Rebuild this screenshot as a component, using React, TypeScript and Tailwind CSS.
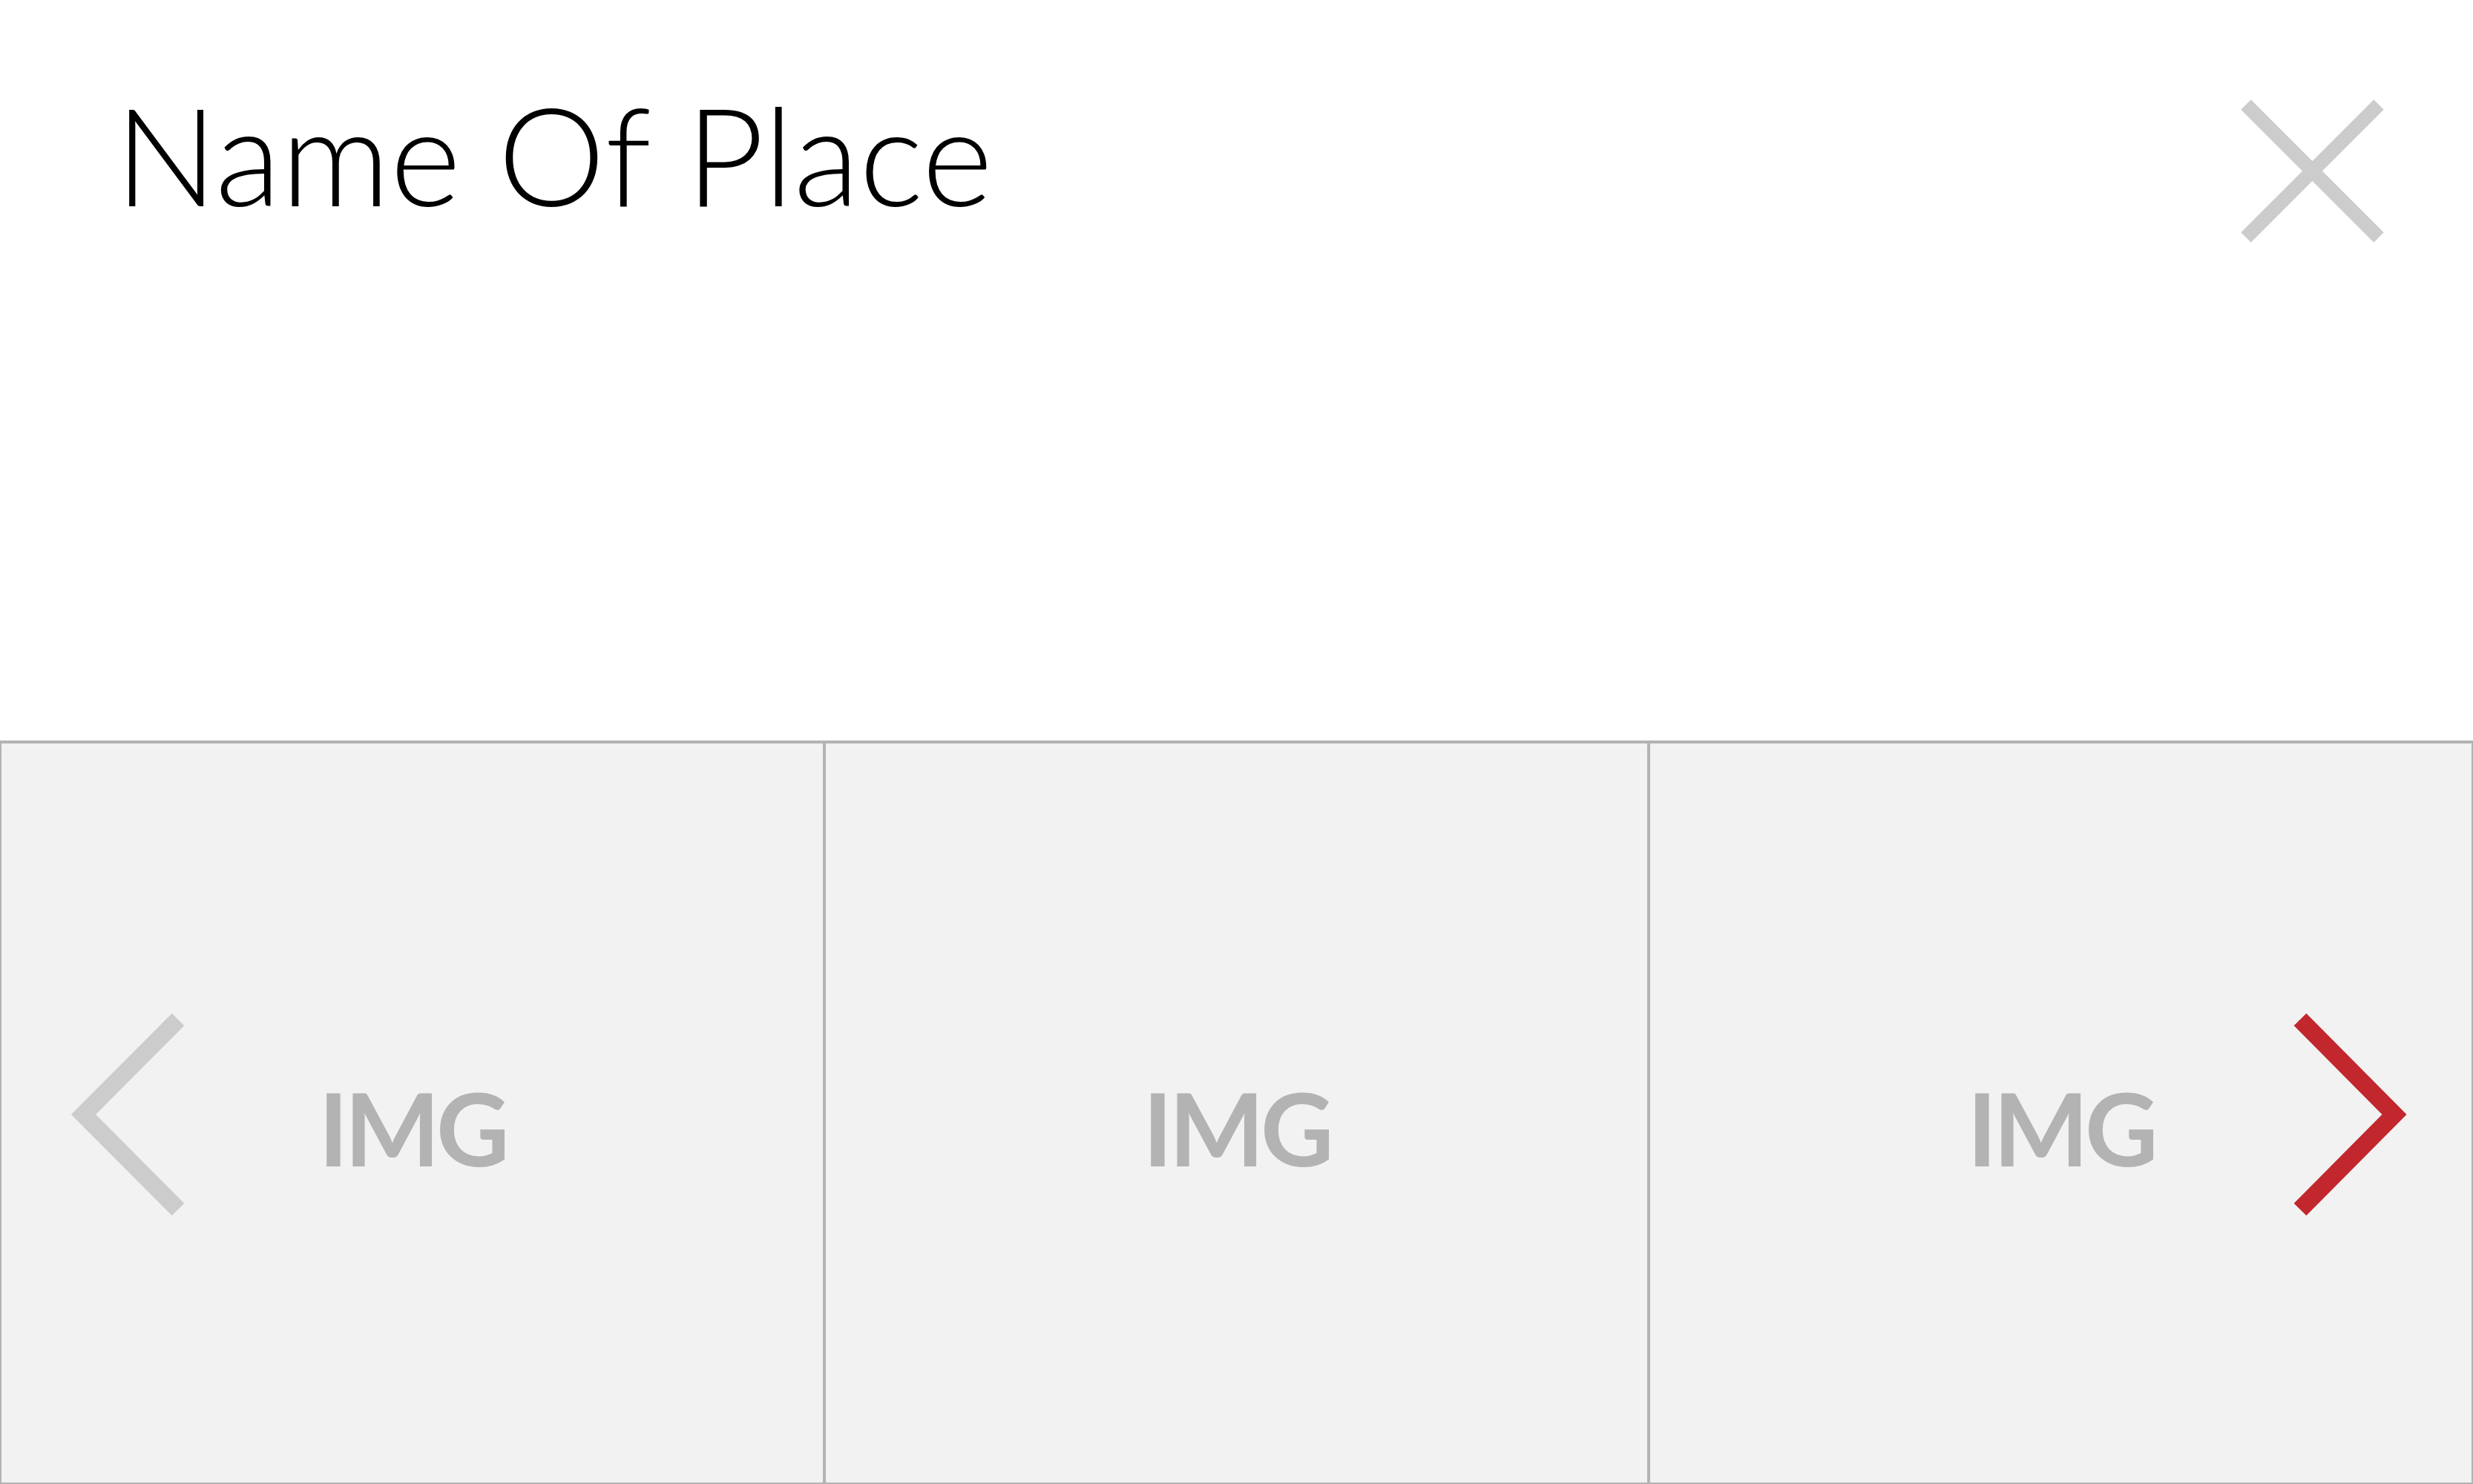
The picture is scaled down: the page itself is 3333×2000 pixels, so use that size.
import React from "react";

function Chevron({ dir, color }: { dir: "left" | "right"; color: string }) {
  const pts = dir === "left" ? "160,22 32.5,150 160,278" : "50,22 177,150 50,278";
  return (
    <svg width="210" height="300" viewBox="0 0 210 300" fill="none">
      <polyline points={pts} stroke={color} strokeWidth="23.5" strokeLinejoin="miter" strokeLinecap="butt" />
    </svg>
  );
}

function Cell() {
  return (
    <div className="h-[1000px] border-2 border-[#b3b3b3] bg-[#f2f2f2] flex items-center justify-center">
      <span className="pt-[40px] font-['Lato',sans-serif] font-bold text-[136px] leading-none text-[#b3b3b3] tracking-[-5px]">
        IMG
      </span>
    </div>
  );
}

export default function App() {
  return (
    <div className="w-[3333px] h-[2000px] bg-white overflow-hidden flex flex-col">
      {/* header */}
      <div className="h-[998px] flex items-start justify-between pl-[155px] pr-[111px]">
        <h1 className="pt-[116px] font-['Lato',sans-serif] font-light text-[183px] leading-none text-black">
          Name Of Place
        </h1>
        <button className="mt-[124px]">
          <svg width="212" height="212" viewBox="0 0 212 212" fill="none">
            <line x1="17" y1="17" x2="196" y2="196" stroke="#cccccc" strokeWidth="19" />
            <line x1="196" y1="17" x2="17" y2="196" stroke="#cccccc" strokeWidth="19" />
          </svg>
        </button>
      </div>

      {/* image strip */}
      <div className="relative border-t-2 border-[#b3b3b3] grid grid-cols-3">
        <Cell />
        <Cell />
        <Cell />
        <button className="absolute left-[80px] top-[352px]">
          <Chevron dir="left" color="#cccccc" />
        </button>
        <button className="absolute left-[3050px] top-[352px]">
          <Chevron dir="right" color="#c1272d" />
        </button>
      </div>
    </div>
  );
}
